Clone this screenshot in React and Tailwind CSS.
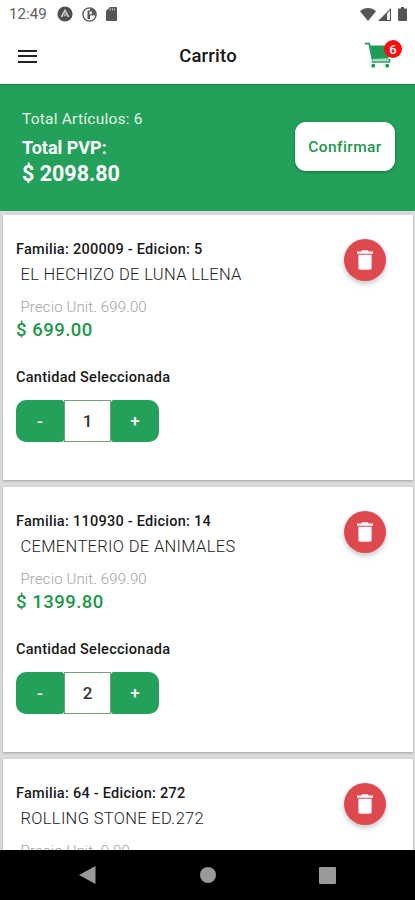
import React, { useState } from 'react';

const initialItems = [
  { id: 1, familia: '200009', edicion: '5', title: 'EL HECHIZO DE LUNA LLENA', unit: 699.0, qty: 1 },
  { id: 2, familia: '110930', edicion: '14', title: 'CEMENTERIO DE ANIMALES', unit: 699.9, qty: 2 },
  { id: 3, familia: '64', edicion: '272', title: 'ROLLING STONE ED.272', unit: 0, qty: 3 },
];

const StatusBar = () => (
  <div className="h-7 shrink-0 flex items-center justify-between pl-[9px] pr-[8px] text-[#5f5f5f]">
    <div className="flex items-center">
      <span className="w-[48px] text-[15px] leading-7 tracking-[0.1px]">12:49</span>
      <svg className="w-4 h-4" viewBox="0 0 16 16">
        <circle cx="8" cy="8" r="7.6" fill="#505050" />
        <path d="M4.400 11 8 4.400l3.600 6.600" fill="none" stroke="#ccc" strokeWidth="1.600" />
        <circle cx="8" cy="9" r="1.4" fill="#aaa" />
      </svg>
      <svg className="w-[15px] h-[15px] ml-[9px]" viewBox="0 0 15 15">
        <circle cx="7.5" cy="7.5" r="6.6" fill="#fff" stroke="#5a5a5a" strokeWidth="1.4" />
        <path d="M5.500 3.500H8V1.200a6.300 6.300 0 0 1 5.800 7.300H8V12H5.500z" fill="#5a5a5a" />
        <path d="M7.500 4.500h2.500v2.800H7.500z" fill="#eee" />
      </svg>
      <svg className="w-[11px] h-[14px] ml-[9px]" viewBox="0 0 11 14">
        <path d="M4 0h6a1 1 0 0 1 1 1v12a1 1 0 0 1-1 1H1a1 1 0 0 1-1-1V4z" fill="#555" />
        <path d="M4.300 1.300v2.300M6.500 1.300v2.300M8.700 1.300v2.300" stroke="#bbb" />
      </svg>
    </div>
    <div className="flex items-center">
      <svg className="w-4 h-[13px]" viewBox="0 0 16 13">
        <path d="M8 13 0 3.200C4.800-1 11.200-1 16 3.200z" fill="#555" />
      </svg>
      <svg className="w-[13px] h-[13px] ml-[2px]" viewBox="0 0 13 13">
        <path d="M0 13 13 0v13z" fill="#555" />
        <path d="M9 5.500 12 2.500V12H9z" fill="#eee" />
      </svg>
      <svg className="w-[9px] h-[14px] ml-[7px]" viewBox="0 0 9 14">
        <path d="M3 0h3v1.500h2a1 1 0 0 1 1 1V13a1 1 0 0 1-1 1H1a1 1 0 0 1-1-1V2.500a1 1 0 0 1 1-1h2z" fill="#555" />
      </svg>
    </div>
  </div>
);

const Header = ({ count }) => (
  <header className="h-[56px] shrink-0 grid grid-cols-3 items-center pl-[18px] pr-[11px]">
    <button type="button" className="flex flex-col gap-[3.500px] w-[19px]">
      <span className="h-[2px] w-full bg-[#222]"></span>
      <span className="h-[2px] w-full bg-[#222]"></span>
      <span className="h-[2px] w-full bg-[#222]"></span>
    </button>
    <h1 className="text-center text-[18.500px] font-medium text-[#161616] tracking-[0.2px] pr-[6px] pt-px">Carrito</h1>
    <div className="relative justify-self-end w-[40px] h-[28px]">
      <svg className="w-[28px] h-[26px]" viewBox="0 0 28 26">
        <path d="M.8 1.600h4.400l3.400 16.200H25" fill="none" stroke="#1f9d58" strokeWidth="1.700" />
        <path d="M5.500 3.500H27l-2.500 13L8.200 17z" fill="#1f9d58" />
        <path d="M8.600 18H25" stroke="#fff" strokeWidth="1.200" />
        <circle cx="9.300" cy="23.700" r="2" fill="#1f9d58" />
        <circle cx="23.200" cy="23.700" r="2" fill="#1f9d58" />
        <path d="M7.600 19.900H25.500V17" fill="none" stroke="#1f9d58" strokeWidth="1.500" />
      </svg>
      <span className="absolute -top-[2px] right-[2px] w-[18px] h-[18px] rounded-full bg-[#fb0d0d] text-white text-[13px] leading-[19px] font-medium text-center">
        {count}
      </span>
    </div>
  </header>
);

const Summary = ({ count, total }) => (
  <section className="h-[127px] shrink-0 bg-[#23a05a] border-t border-[#158a48] flex items-center justify-between pl-[22px] pr-[20px]">
    <div className="text-white -mt-[2px]">
      <p className="text-[15.500px] leading-[22px] tracking-[0.22px] text-[#e4f6e4]">Total Artículos: {count}</p>
      <p className="text-[18px] leading-[26px] mt-[5px] font-bold">Total PVP:</p>
      <p className="text-[21.500px] leading-[26px] font-bold">$ {total}</p>
    </div>
    <button
      type="button"
      className="w-[100px] h-[49px] -mt-[3px] rounded-[11px] bg-white text-[#1c964c] text-[15.500px] tracking-[0.4px] pt-[2px] font-medium shadow-[0_1px_3px_rgba(0,70,30,0.5)]"
    >
      Confirmar
    </button>
  </section>
);

const TrashIcon = () => (
  <svg className="w-4 h-[20px]" viewBox="0 0 16 20">
    <path d="M0 1.500h4.200L5.200.3h5.600l1 1.200H16v2.200H0z" fill="#fff" />
    <path d="M1.400 4.800h13.200v13.200a1.800 1.800 0 0 1-1.800 1.800H3.200a1.800 1.800 0 0 1-1.800-1.800z" fill="#fff" />
  </svg>
);

const CartItem = ({ item, onChange, onRemove }) => (
  <article className="relative h-[265px] shrink-0 bg-white pl-[13px] pt-[24px] shadow-[0_1px_2px_rgba(0,0,0,0.25)]">
    <p className="text-[14.500px] leading-[22px] tracking-[0.26px] font-medium text-[#1a1a1a]">
      Familia: {item.familia} - Edicion: {item.edicion}
    </p>
    <p className="text-[16.500px] leading-[22px] tracking-[0.33px] mt-[3px] pl-[4.500px] text-[#222] font-light">
      {item.title}
    </p>
    <p className="text-[15px] leading-[20px] tracking-[0.13px] mt-[11px] pl-[4.500px] text-[#a2a2a2] font-light">
      Precio Unit. {item.unit.toFixed(2)}
    </p>
    <p className="text-[18.500px] leading-[24px] tracking-[0.5px] mt-px font-medium text-[#1c9748]">
      $ {(item.unit * item.qty).toFixed(2)}
    </p>
    <p className="text-[14.500px] leading-[20px] tracking-[0.27px] mt-[26px] font-medium text-[#1a1a1a]">
      Cantidad Seleccionada
    </p>
    <div className="flex w-[143px] h-[42px] mt-[12px] text-[17px] font-medium">
      <button
        type="button"
        onClick={() => onChange(item.id, -1)}
        className="w-[48px] rounded-l-[10px] rounded-r-[3px] bg-[#23a05a] text-white pt-[2px]"
      >
        -
      </button>
      <span className="w-[47px] border border-[#71a077] text-[#333] flex items-center justify-center pt-px">
        {item.qty}
      </span>
      <button
        type="button"
        onClick={() => onChange(item.id, 1)}
        className="w-[48px] rounded-r-[10px] rounded-l-[3px] bg-[#23a05a] text-white pt-[2px]"
      >
        +
      </button>
    </div>
    <button
      type="button"
      onClick={() => onRemove(item.id)}
      className="absolute top-[23.500px] right-[27px] w-[42px] h-[42px] rounded-full bg-[#de484f] flex items-center justify-center shadow-[0_3px_5px_rgba(0,0,0,0.22)]"
    >
      <TrashIcon />
    </button>
  </article>
);

// Android navigation bar
const NavBar = () => (
  <nav className="h-[50px] shrink-0 bg-black flex items-center justify-between pl-[79px] pr-[79px]">
    <svg className="w-[17px] h-[18px]" viewBox="0 0 17 18">
      <path d="M0 9 16.500 0v18z" fill="#999" />
    </svg>
    <span className="w-4 h-4 rounded-full bg-[#999]"></span>
    <span className="w-[17px] h-[17px] rounded-[1px] bg-[#999]"></span>
  </nav>
);

const App = () => {
  const [items, setItems] = useState(initialItems);

  const count = items.reduce((sum, i) => sum + i.qty, 0);
  const total = items.reduce((sum, i) => sum + i.qty * i.unit, 0).toFixed(2);

  const changeQty = (id, delta) =>
    setItems(items.map((i) => (i.id === id ? { ...i, qty: Math.max(1, i.qty + delta) } : i)));
  const removeItem = (id) => setItems(items.filter((i) => i.id !== id));

  return (
    <div className="w-full h-[900px] overflow-hidden flex flex-col bg-white font-['Roboto',sans-serif]">
      <StatusBar />
      <Header count={count} />
      <Summary count={count} total={total} />
      <main className="flex-1 min-h-0 overflow-hidden bg-[#dadada] flex flex-col gap-[7px] pt-[4px] pl-[3px] pr-[2px]">
        {items.map((item) => (
          <CartItem key={item.id} item={item} onChange={changeQty} onRemove={removeItem} />
        ))}
      </main>
      <NavBar />
    </div>
  );
};

export default App;
